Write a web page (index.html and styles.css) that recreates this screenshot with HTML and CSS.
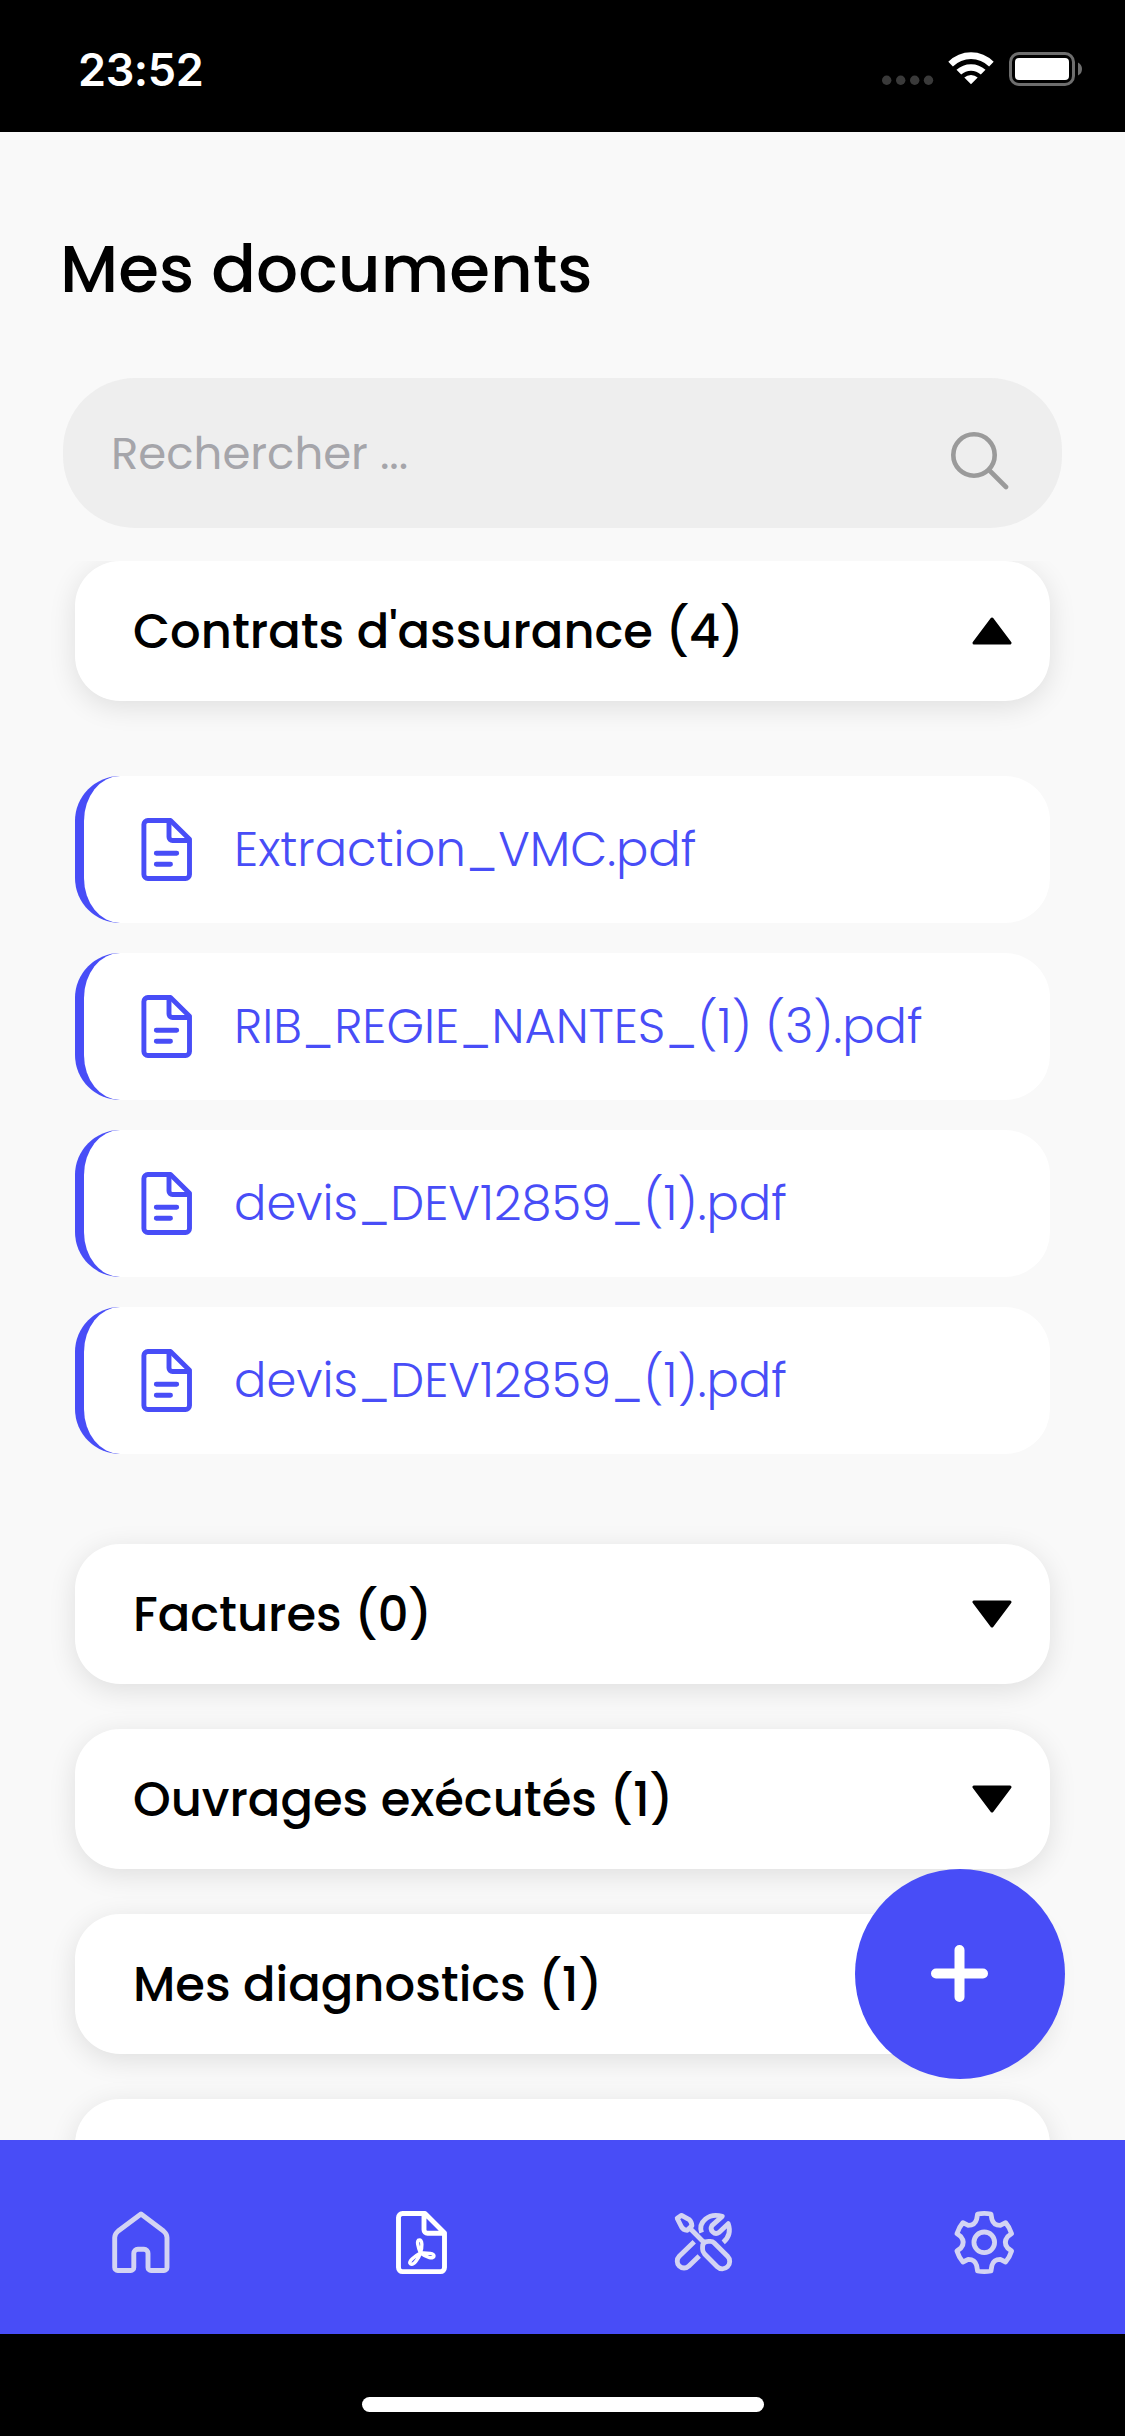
FILE: index.html
```html
<!DOCTYPE html>
<html lang="fr">
<head>
<meta charset="utf-8">
<title>Mes documents</title>
<link rel="stylesheet" href="styles.css">
</head>
<body>
<svg width="0" height="0" class="defs">
  <symbol id="doc" viewBox="0 0 60 72">
    <g fill="none" stroke="currentColor" stroke-width="4.900" stroke-linejoin="round" stroke-linecap="round">
      <path d="M11.900 6.500H34.500L53.500 25.200V60.500a4 4 0 0 1-4 4H11.900a4 4 0 0 1-4-4V10.500a4 4 0 0 1 4-4z"/>
      <path d="M33 8v15a3.500 3.500 0 0 0 3.500 3.500H52"/>
      <path d="M20.300 39.300h20.400M20.300 50.300h14.200"/>
    </g>
  </symbol>
</svg>
<div class="screen">
  <header class="status">
    <span class="time">23:52</span>
    <svg class="status-icons" width="210" height="40" viewBox="-3 -1 210 40">
      <g fill="#3a3a3a"><circle cx="6.700" cy="30.300" r="4.700"/><circle cx="20.700" cy="30.300" r="4.700"/><circle cx="34.700" cy="30.300" r="4.700"/><circle cx="48.500" cy="30.300" r="4.700"/></g>
      <path fill="#fff" d="M68.300 11.800a32 32 0 0 1 45.400 0l-4.600 4.600a26 26 0 0 0-36.200 0zM76.500 19.800a21.500 21.500 0 0 1 29 0l-4.700 4.700a14.500 14.500 0 0 0-19.600 0zM84.300 27.500a10 10 0 0 1 13.400 0L91 34.200z"/>
      <rect x="130.500" y="3.500" width="63" height="31" rx="8.500" fill="none" stroke="#6e6e6e" stroke-width="3"/>
      <rect x="135" y="8" width="54" height="22" rx="4" fill="#fff"/>
      <path fill="#6e6e6e" d="M198 12.500q4 2 4 6.500t-4 6.500z"/>
    </svg>
  </header>
  <main class="content">
    <h1 class="title">Mes documents</h1>
    <div class="search">
      <span class="placeholder">Rechercher ...</span>
      <svg width="60" height="60" viewBox="0 0 60 60" fill="none" stroke="#9a9a9a" stroke-width="4.600" stroke-linecap="round"><circle cx="24" cy="25" r="20.700"/><path d="M39 40l17 17"/></svg>
    </div>
    <div class="list">
      <section class="group">
        <div class="card"><span class="label">Contrats d'assurance (4)</span><svg class="arrow" viewBox="0 0 40 28"><path d="M20 2L38 26H2z"/></svg></div>
        <div class="files">
          <div class="file"><svg class="doc"><use href="#doc"/></svg><span>Extraction_VMC.pdf</span></div>
          <div class="file"><svg class="doc"><use href="#doc"/></svg><span>RIB_REGIE_NANTES_(1) (3).pdf</span></div>
          <div class="file"><svg class="doc"><use href="#doc"/></svg><span>devis_DEV12859_(1).pdf</span></div>
          <div class="file"><svg class="doc"><use href="#doc"/></svg><span>devis_DEV12859_(1).pdf</span></div>
        </div>
      </section>
      <div class="card"><span class="label">Factures (0)</span><svg class="arrow" viewBox="0 0 40 28"><path d="M2 2h36L20 26z"/></svg></div>
      <div class="card"><span class="label">Ouvrages exécutés (1)</span><svg class="arrow" viewBox="0 0 40 28"><path d="M2 2h36L20 26z"/></svg></div>
      <div class="card"><span class="label">Mes diagnostics (1)</span></div>
      <div class="card"></div>
    </div>
    <button class="fab" aria-label="Ajouter"><svg width="60" height="60" viewBox="0 0 60 60" stroke="#fff" stroke-width="10" stroke-linecap="round"><path d="M29.500 6v47M6 29.500h47"/></svg></button>
  </main>
  <nav class="tabs">
    <a class="tab"><svg width="72" height="72" viewBox="0 0 72 72"><path d="M36 7L58.500 24q3.500 3 3.500 6.500v30a3 3 0 0 1-3 3H46a3 3 0 0 1-3-3V46.300a4 4 0 0 0-4-4h-6.200a4 4 0 0 0-4 4v14.200a3 3 0 0 1-3 3H12.700a3 3 0 0 1-3-3v-30q0-3.500 3.500-6.500z"/></svg></a>
    <a class="tab active"><svg width="72" height="72" viewBox="0 0 72 72"><path d="M16.500 6.500h22.500L58.500 26v34.600a4 4 0 0 1-4 4H16.500a4 4 0 0 1-4-4V10.500a4 4 0 0 1 4-4zM38 8v14.800a3.500 3.500 0 0 0 3.500 3.500H57"/><path stroke-width="3.400" d="M34.400 46C32 40 30 33 33.300 33S36.500 40 34.400 46C40 46 48 45.500 48 49S40 50.500 34.400 46C33 51 27.500 59 24.500 56.800S29 49 34.400 46z"/></svg></a>
    <a class="tab"><svg width="72" height="72" viewBox="0 0 72 72"><g transform="translate(2.900 -2) scale(.33333)" stroke-width="14.500"><path d="M22 40L35 31L58 44Q65 50 66 62L52 76Q40 75 35 66zM60 70L100 110M98 126Q98 109 116 109H122Q128 109 133 114L173 154A21 21 0 0 1 142 185L104 147Q98 140 98 132zM73 110L28 154A20 20 0 0 0 57 183L88 153M95 83C84 52 116 22 157 34L126 62C118 76 134 92 148 82L175 56C184 82 175 99 160 112"/></g></svg></a>
    <a class="tab"><svg width="72" height="72" viewBox="0 0 72 72"><g transform="translate(-308.400 -27) scale(.33333)" stroke-width="14.500"><circle cx="1034" cy="187" r="31"/><path d="M1014 102Q1034 98 1054 102L1057 118Q1062 136 1082 136L1098 128Q1110 142 1116 161L1104 170Q1090 187 1104 204L1116 213Q1110 232 1098 246L1082 238Q1062 238 1057 256L1054 273Q1034 277 1014 273L1011 256Q1006 238 986 238L970 246Q958 232 952 213L964 204Q978 187 964 170L952 161Q958 142 970 128L986 136Q1006 136 1011 118Z"/></g></svg></a>
  </nav>
  <footer class="home"><span></span></footer>
</div>
</body>
</html>
```
FILE: styles.css
```css
* { box-sizing: border-box; }
body { margin: 0; font-family: Poppins, Inter, sans-serif; font-feature-settings: "cv11"; }
.defs { position: absolute; }
.screen { width: 1125px; height: 2436px; display: flex; flex-direction: column; overflow: hidden; background: #000; }
.status { height: 132px; flex: none; display: flex; justify-content: space-between; align-items: flex-start; padding: 49px 38px 0 78px; color: #fff; }
.time { font: 600 45px/41px Inter, sans-serif; letter-spacing: -0.4px; }
.status-icons { flex: none; }
.content { height: 2008px; flex: none; position: relative; overflow: hidden; background: #f9f9f9; display: flex; flex-direction: column; }
.title { margin: 97px 0 0 60px; height: 80px; font-size: 66px; line-height: 80px; font-weight: 500; white-space: nowrap; }
.search { margin: 69px 63px 0; height: 150px; flex: none; border-radius: 72px; background: #eee; display: flex; justify-content: space-between; align-items: center; padding: 0 52px 0 48px; }
.search svg { margin-top: 14px; }
.placeholder { font-size: 45px; color: #a5a5aa; font-weight: 400; padding-top: 2px; }
.list { margin-top: 33px; padding: 0 75px; flex: none; display: flex; flex-direction: column; gap: 45px; overflow: hidden; height: 1579px; }
.group { margin-bottom: 45px; }
.card { height: 140px; flex: none; border-radius: 45px; background: #fff; box-shadow: 0 6px 28px rgba(0, 0, 10, 0.11); display: flex; justify-content: space-between; align-items: center; padding: 0 38px 0 58px; }
.label { font-size: 48px; font-weight: 500; white-space: nowrap; padding-top: 2px; }
.arrow { width: 40px; height: 28px; stroke: #000; stroke-width: 3; stroke-linejoin: round; }
.files { margin-top: 75px; display: flex; flex-direction: column; gap: 30px; }
.file { height: 147px; border-left: 9px solid #484df7; border-radius: 45px; background: #fff; display: flex; align-items: center; color: #484df7; font-size: 48px; font-weight: 300; white-space: nowrap; padding-left: 52px; gap: 38px; }
.doc { width: 60px; height: 72px; }
.fab { position: absolute; left: 855px; top: 1737px; width: 210px; height: 210px; border: 0; border-radius: 50%; background: #484df7; display: grid; place-items: center; padding: 0; }
.tabs { height: 194px; flex: none; background: #484df7; display: grid; grid-template-columns: repeat(4, 1fr); }
.tab { display: grid; place-items: center; padding-top: 12px; }
.tab svg { fill: none; stroke: #d3d4f3; stroke-width: 4.9; stroke-linejoin: round; }
.tab.active svg { stroke: #fff; }
.home { flex: 1; display: flex; justify-content: center; padding-top: 63px; }
.home span { width: 402px; height: 15px; border-radius: 8px; background: #fff; }
```
